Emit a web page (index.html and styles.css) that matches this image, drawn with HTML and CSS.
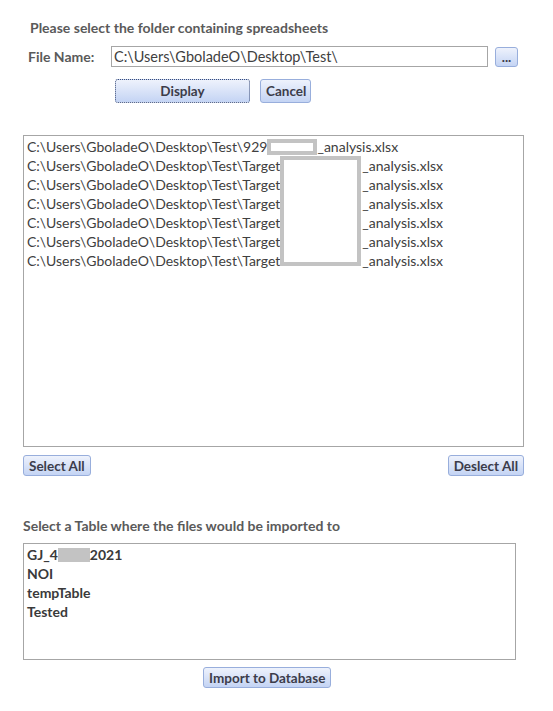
FILE: index.html
```html
<!DOCTYPE html>
<html lang="en">
<head>
    <meta charset="UTF-8">
    <title>Import Spreadsheets</title>
    <link rel="stylesheet" href="styles.css">
</head>
<body>
    <div class="form">
        <div class="title">Please select the folder containing spreadsheets</div>

        <div class="file-row">
            <label for="fileName">File Name:</label>
            <input type="text" id="fileName" class="path" value="C:\Users\GboladeO\Desktop\Test\">
            <button class="btn browse">...</button>
        </div>

        <div class="btn-row">
            <button class="btn display">Display</button>
            <button class="btn cancel">Cancel</button>
        </div>

        <!-- files found in the folder -->
        <div class="listbox files">
            <div class="item">C:\Users\GboladeO\Desktop\Test\929<span class="mask small"></span>_analysis.xlsx</div>
            <div class="item">C:\Users\GboladeO\Desktop\Test\Target<span class="gap"><span class="mask big"></span></span>_analysis.xlsx</div>
            <div class="item">C:\Users\GboladeO\Desktop\Test\Target<span class="gap"></span>_analysis.xlsx</div>
            <div class="item">C:\Users\GboladeO\Desktop\Test\Target<span class="gap"></span>_analysis.xlsx</div>
            <div class="item">C:\Users\GboladeO\Desktop\Test\Target<span class="gap"></span>_analysis.xlsx</div>
            <div class="item">C:\Users\GboladeO\Desktop\Test\Target<span class="gap"></span>_analysis.xlsx</div>
            <div class="item">C:\Users\GboladeO\Desktop\Test\Target<span class="gap"></span>_analysis.xlsx</div>
        </div>

        <div class="select-row">
            <button class="btn">Select All</button>
            <button class="btn">Deslect All</button>
        </div>

        <div class="title sub">Select a Table where the files would be imported to</div>

        <!-- tables in the database -->
        <div class="listbox tables">
            <div class="item">GJ_4<span class="blot"></span>2021</div>
            <div class="item">NOI</div>
            <div class="item">tempTable</div>
            <div class="item">Tested</div>
        </div>

        <div class="import-row">
            <button class="btn">Import to Database</button>
        </div>
    </div>
</body>
</html>
```

FILE: styles.css
```css
body {
    margin: 0;
    background-color: #ffffff;
    font-family: 'Lato', 'Open Sans', sans-serif;
    font-size: 14px;
    color: #404040;
}

.form {
    padding: 18px 0 0 23px;
    width: 501px;
}

.title {
    font-weight: bold;
    color: #5a5a5a;
    margin-left: 7px;
    line-height: 19px;
}

.file-row {
    display: flex;
    align-items: center;
    margin-top: 9px;
}

.file-row label {
    font-weight: bold;
    color: #5a5a5a;
    width: 83px;
    margin-left: 5px;
}

.path {
    width: 377px;
    height: 21px;
    box-sizing: border-box;
    border: 1px solid #a6a6a6;
    padding: 0 2px;
    font-family: inherit;
    font-size: 14.5px;
    color: #404040;
    outline: none;
}

.btn {
    font-family: inherit;
    font-size: 13.5px;
    font-weight: bold;
    color: #3c3c4a;
    background: linear-gradient(#eef2fc, #c4d4f4);
    border: 1px solid #98aedc;
    border-radius: 3px;
    height: 21px;
    padding: 0 5px;
    line-height: 18px;
    cursor: pointer;
}

.browse {
    width: 23px;
    height: 20px;
    margin-left: 7px;
    padding: 0;
    line-height: 12px;
}

.btn-row {
    display: flex;
    gap: 10px;
    margin: 12px 0 0 92px;
}

.btn-row .btn {
    height: 24px;
}

.display {
    width: 135px;
    border: 1px dotted #3a4c78;
}

.cancel {
    width: 51px;
}

.listbox {
    border: 1px solid #a6a6a6;
    box-sizing: border-box;
    padding: 1px 3px;
}

.item {
    line-height: 19px;
    white-space: nowrap;
}

.files {
    margin-top: 32px;
    height: 312px;
}

.mask {
    display: inline-block;
    border: 4px solid #c3c3c3;
    box-sizing: border-box;
    background: #ffffff;
}

.mask.small {
    width: 50px;
    height: 16px;
    vertical-align: -3px;
}

.gap {
    position: relative;
    display: inline-block;
    width: 82px;
    height: 1px;
}

.mask.big {
    position: absolute;
    left: 0;
    top: -14px;
    width: 81px;
    height: 110px;
}

.select-row {
    display: flex;
    justify-content: space-between;
    margin-top: 8px;
}

.title.sub {
    margin: 40px 0 0 0;
}

.tables {
    margin-top: 8px;
    width: 493px;
    height: 117px;
    font-weight: bold;
    color: #3a3a3a;
}

.blot {
    display: inline-block;
    width: 32px;
    height: 14px;
    background: #c3c3c3;
    vertical-align: -2px;
}

.import-row {
    margin: 7px 0 0 180px;
}
```
